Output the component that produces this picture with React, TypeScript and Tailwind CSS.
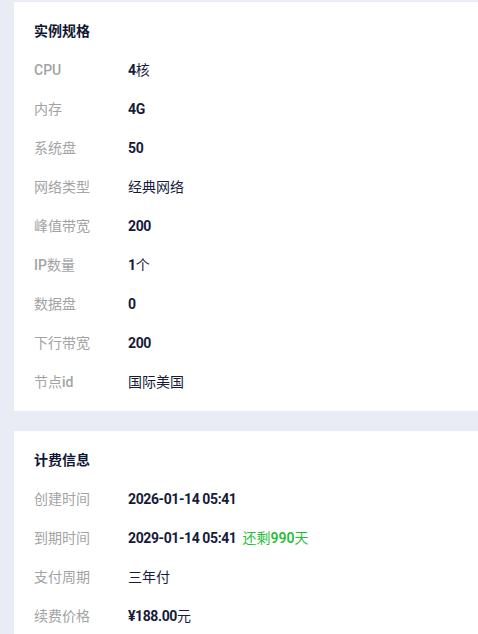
const font = "font-['Roboto','Noto_Sans_CJK_SC',sans-serif]";

type Row = { label: React.ReactNode; key: string; value: React.ReactNode };

function B({ children }: { children: React.ReactNode }) {
  return <span className="font-bold tracking-[-0.4px]">{children}</span>;
}

function M({ children }: { children: React.ReactNode }) {
  return <span className="font-medium">{children}</span>;
}

const specRows: Row[] = [
  { key: "cpu", label: <M>CPU</M>, value: <><B>4</B>核</> },
  { key: "mem", label: "内存", value: <B>4G</B> },
  { key: "sys", label: "系统盘", value: <B>50</B> },
  { key: "net", label: "网络类型", value: "经典网络" },
  { key: "peak", label: "峰值带宽", value: <B>200</B> },
  { key: "ip", label: <><M>IP</M>数量</>, value: <><B>1</B>个</> },
  { key: "disk", label: "数据盘", value: <B>0</B> },
  { key: "down", label: "下行带宽", value: <B>200</B> },
  { key: "node", label: <>节点<M>id</M></>, value: "国际美国" },
];

const billRows: Row[] = [
  { key: "create", label: "创建时间", value: <B>2026-01-14 05:41</B> },
  {
    key: "expire",
    label: "到期时间",
    value: (
      <>
        <B>2029-01-14 05:41</B>
        <span className="ml-[6px] text-[#1fbf3a]">
          还剩<span className="font-semibold">990</span>天
        </span>
      </>
    ),
  },
  { key: "cycle", label: "支付周期", value: "三年付" },
  { key: "price", label: "续费价格", value: <><B>¥188.00</B>元</> },
];

function Card({ title, rows, last }: { title: string; rows: Row[]; last?: boolean }) {
  return (
    <section className={`bg-white pl-[20px] pr-4 pt-[10px] ${last ? "pb-4" : "pb-[9px]"}`}>
      <h2 className="flex h-[39px] items-center text-[14px] font-bold text-[#111733]">{title}</h2>
      {rows.map((r) => (
        <div key={r.key} className="flex h-[39px] items-center text-[14px]">
          <span className="w-[94px] shrink-0 text-[#a3a3a3]">{r.label}</span>
          <span className="text-[#161b3a]">{r.value}</span>
        </div>
      ))}
    </section>
  );
}

export default function App() {
  return (
    <div className={`min-h-screen bg-[#e9ecf4] pl-[14px] pt-[2px] ${font}`}>
      <div className="flex flex-col gap-[20px]">
        <Card title="实例规格" rows={specRows} />
        <Card title="计费信息" rows={billRows} last />
      </div>
    </div>
  );
}
